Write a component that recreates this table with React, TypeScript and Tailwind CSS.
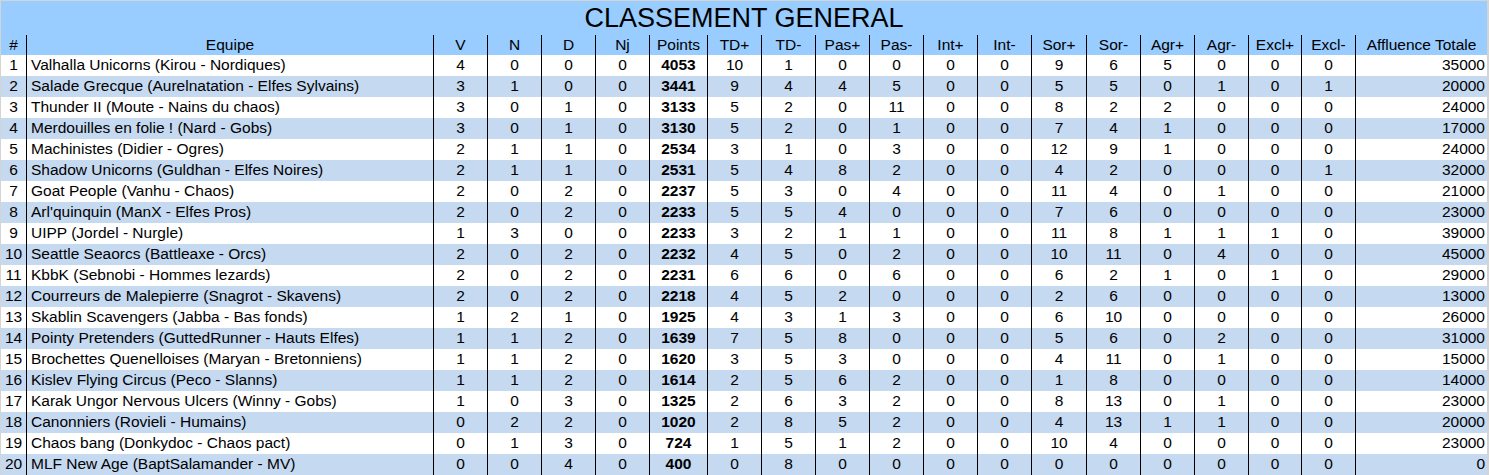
import React from "react";

const headers = [
  "#", "Equipe", "V", "N", "D", "Nj", "Points", "TD+", "TD-", "Pas+", "Pas-",
  "Int+", "Int-", "Sor+", "Sor-", "Agr+", "Agr-", "Excl+", "Excl-", "Affluence Totale",
];

const rows: [string, number[]][] = [
  ["Valhalla Unicorns (Kirou - Nordiques)", [4, 0, 0, 0, 4053, 10, 1, 0, 0, 0, 0, 9, 6, 5, 0, 0, 0, 35000]],
  ["Salade Grecque (Aurelnatation - Elfes Sylvains)", [3, 1, 0, 0, 3441, 9, 4, 4, 5, 0, 0, 5, 5, 0, 1, 0, 1, 20000]],
  ["Thunder II (Moute - Nains du chaos)", [3, 0, 1, 0, 3133, 5, 2, 0, 11, 0, 0, 8, 2, 2, 0, 0, 0, 24000]],
  ["Merdouilles en folie ! (Nard - Gobs)", [3, 0, 1, 0, 3130, 5, 2, 0, 1, 0, 0, 7, 4, 1, 0, 0, 0, 17000]],
  ["Machinistes (Didier - Ogres)", [2, 1, 1, 0, 2534, 3, 1, 0, 3, 0, 0, 12, 9, 1, 0, 0, 0, 24000]],
  ["Shadow Unicorns (Guldhan - Elfes Noires)", [2, 1, 1, 0, 2531, 5, 4, 8, 2, 0, 0, 4, 2, 0, 0, 0, 1, 32000]],
  ["Goat People (Vanhu - Chaos)", [2, 0, 2, 0, 2237, 5, 3, 0, 4, 0, 0, 11, 4, 0, 1, 0, 0, 21000]],
  ["Arl'quinquin (ManX - Elfes Pros)", [2, 0, 2, 0, 2233, 5, 5, 4, 0, 0, 0, 7, 6, 0, 0, 0, 0, 23000]],
  ["UIPP (Jordel - Nurgle)", [1, 3, 0, 0, 2233, 3, 2, 1, 1, 0, 0, 11, 8, 1, 1, 1, 0, 39000]],
  ["Seattle Seaorcs (Battleaxe - Orcs)", [2, 0, 2, 0, 2232, 4, 5, 0, 2, 0, 0, 10, 11, 0, 4, 0, 0, 45000]],
  ["KbbK (Sebnobi - Hommes lezards)", [2, 0, 2, 0, 2231, 6, 6, 0, 6, 0, 0, 6, 2, 1, 0, 1, 0, 29000]],
  ["Courreurs de Malepierre (Snagrot - Skavens)", [2, 0, 2, 0, 2218, 4, 5, 2, 0, 0, 0, 2, 6, 0, 0, 0, 0, 13000]],
  ["Skablin Scavengers (Jabba - Bas fonds)", [1, 2, 1, 0, 1925, 4, 3, 1, 3, 0, 0, 6, 10, 0, 0, 0, 0, 26000]],
  ["Pointy Pretenders (GuttedRunner - Hauts Elfes)", [1, 1, 2, 0, 1639, 7, 5, 8, 0, 0, 0, 5, 6, 0, 2, 0, 0, 31000]],
  ["Brochettes Quenelloises (Maryan - Bretonniens)", [1, 1, 2, 0, 1620, 3, 5, 3, 0, 0, 0, 4, 11, 0, 1, 0, 0, 15000]],
  ["Kislev Flying Circus (Peco - Slanns)", [1, 1, 2, 0, 1614, 2, 5, 6, 2, 0, 0, 1, 8, 0, 0, 0, 0, 14000]],
  ["Karak Ungor Nervous Ulcers (Winny - Gobs)", [1, 0, 3, 0, 1325, 2, 6, 3, 2, 0, 0, 8, 13, 0, 1, 0, 0, 23000]],
  ["Canonniers (Rovieli - Humains)", [0, 2, 2, 0, 1020, 2, 8, 5, 2, 0, 0, 4, 13, 1, 1, 0, 0, 20000]],
  ["Chaos bang (Donkydoc - Chaos pact)", [0, 1, 3, 0, 724, 1, 5, 1, 2, 0, 0, 10, 4, 0, 0, 0, 0, 23000]],
  ["MLF New Age (BaptSalamander - MV)", [0, 0, 4, 0, 400, 0, 8, 0, 0, 0, 0, 0, 0, 0, 0, 0, 0, 0]],
];

// column widths measured off the sheet (# col loses 1px to the outer border)
const grid =
  "grid grid-cols-[25px_407px_54px_54px_54px_54px_58px_54px_54px_54px_54px_54px_54px_55px_54px_54px_54px_53px_54px_132px]";

const App = () => {
  return (
    <div
      className="w-[1489px] h-[475px] overflow-hidden border-l border-t border-r-2 border-[#d4d4d4] text-black text-[15.5px]"
      style={{ fontFamily: '"Liberation Sans", Arial, sans-serif' }}
    >
      <div className="h-[33px] bg-[#99ccff] text-center text-[27px] leading-[31px] pt-[2px]">
        CLASSEMENT GENERAL
      </div>

      <div className={`${grid} h-[21px] bg-[#99ccff] leading-[20px] pt-[1px]`}>
        {headers.map((h, i) => (
          <div
            key={h}
            className={`text-center whitespace-nowrap ${i > 0 ? "border-l border-black" : ""}`}
          >
            {h}
          </div>
        ))}
      </div>

      {rows.map(([team, vals], r) => (
        <div
          key={team}
          className={`${grid} h-[21px] leading-[20px] ${r % 2 === 0 ? "bg-white" : "bg-[#c5d9f1]"}`}
        >
          <div className="text-center">{r + 1}</div>
          <div className="border-l border-black pl-[4px] whitespace-nowrap">{team}</div>
          {vals.map((v, i) => {
            const last = i === vals.length - 1;
            return (
              <div
                key={i}
                className={`border-l border-black ${
                  last ? "text-right pr-[2px]" : "text-center"
                } ${i === 4 ? "font-bold" : ""}`}
              >
                {v}
              </div>
            );
          })}
        </div>
      ))}
    </div>
  );
};

export default App;
